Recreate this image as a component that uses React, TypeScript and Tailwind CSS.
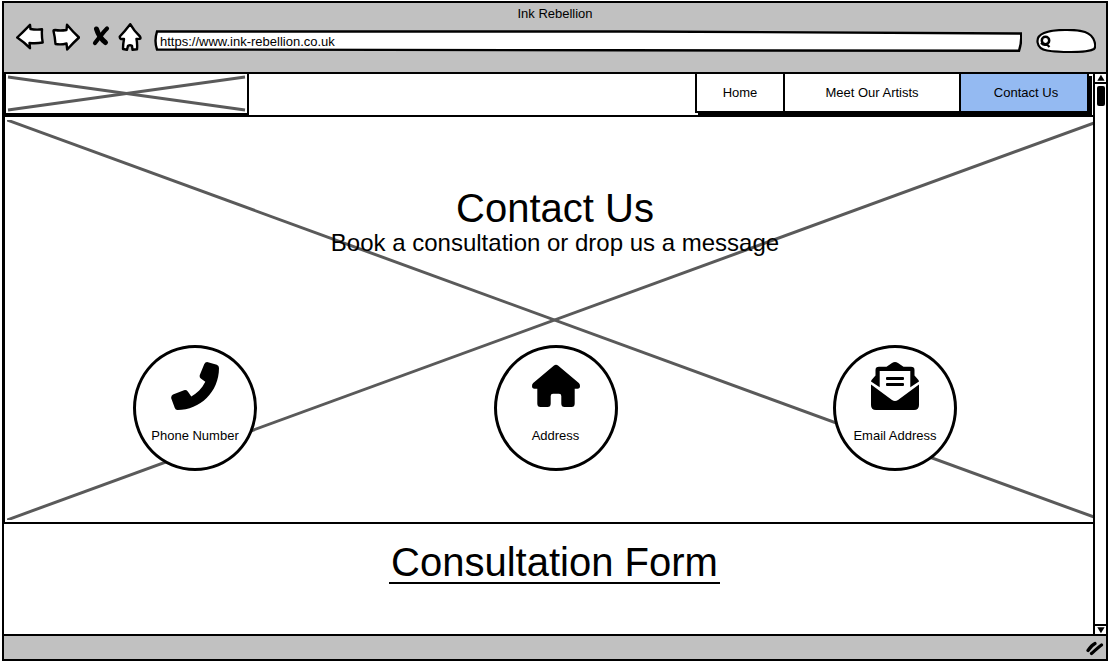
import type { ReactNode } from "react";

function BackIcon() {
  return (
    <svg className="h-7 w-7" viewBox="0 0 28 28" fill="#fff" stroke="#000" strokeWidth="2.4" strokeLinejoin="round" aria-hidden="true">
      <path d="M1.200 14.500Q7 9 14 1.800L14.500 6Q20 7 26 6.300 25.500 13 26.700 19.500 20 20.800 13.500 20L14 25.200Q8 19 1.200 14.500Z" />
    </svg>
  );
}

function ForwardIcon() {
  return (
    <svg className="h-7 w-7" viewBox="0 0 28 28" fill="#fff" stroke="#000" strokeWidth="2.4" strokeLinejoin="round" aria-hidden="true">
      <path d="M1.500 8Q1.500 7 3 7 8 8 14.500 7L15 1.800Q21 9 27 14.500 21 20 15.200 26.500L14.500 20.500Q9 22 3.500 21 3 14 1.500 8Z" />
    </svg>
  );
}

function StopIcon() {
  return (
    <svg className="h-7 w-[18px]" viewBox="0 0 18 28" fill="none" stroke="#000" strokeLinecap="round" aria-hidden="true">
      <path d="M4.500 6C6 11 9 16 13.500 19.500" strokeWidth="5" />
      <path d="M15 5.500C10.500 10 7 15 3 20" strokeWidth="4.200" />
    </svg>
  );
}

function HomeIcon() {
  return (
    <svg className="h-7 w-6" viewBox="0 0 24 28" fill="#fff" stroke="#000" strokeWidth="2.4" strokeLinejoin="round" aria-hidden="true">
      <path d="M12.200 1.200Q7 8 1.800 13.500 1.500 15.500 3 16H6Q5 21 5 26L9 26.800 10 22.800Q12 21.800 14 22.800L14.500 26.800 19 26.300Q19.500 21 18.500 16L22 15.800Q23 15.300 22 13.500 16 8 12.200 1.200Z" />
    </svg>
  );
}

function PhoneIcon() {
  return (
    <svg className="h-12 w-12 shrink-0" viewBox="0 0 48 48" aria-hidden="true">
      <path d="M37 0.200 45.800 2.800Q48 3.600 48 6C48 30 29 48 6.500 48Q4.500 48 3.800 46L0.300 36.500Q-0.300 34 2 32.500L13 28.200Q15.300 27.600 16.800 29.500L20.300 34.500C26 31.500 31 26.500 34.300 19.800L29.800 16.500Q28 15 29 12.500L33.300 2Q34.500-0.400 37 0.200Z" />
    </svg>
  );
}

function HouseIcon() {
  return (
    <svg className="h-12 w-12 shrink-0" viewBox="0 0 48 48" aria-hidden="true">
      <path d="M24 2.700Q22.900 2.700 22 3.500L1.200 21Q0 22.200 0 24 0 26.700 2.500 26.700H5.300V41.500Q5.300 45 8.500 45H15.500Q18.700 45 18.700 41.500V34Q18.700 31.700 21 31.700H27Q29.300 31.700 29.300 34V41.500Q29.300 45 32.500 45H39.500Q42.700 45 42.700 41.500V26.700H45.500Q48 26.700 48 24 48 22.200 46.800 21L26 3.500Q25.100 2.700 24 2.700Z" />
    </svg>
  );
}

function EnvelopeIcon() {
  return (
    <svg className="h-12 w-12 shrink-0" viewBox="0 0 48 48" aria-hidden="true">
      <path d="M0 22.500 21 38Q24 40 27 38L48 22.500V43Q48 48 43 48H5Q0 48 0 43Z" />
      <path d="M0 19.500Q0.200 18.200 1.200 17.200L4.500 13.500V8Q4.500 4.700 8 4.700H15.500L21 1Q24-1 27 1L32.500 4.700H40Q43.500 4.700 43.500 8V13.500L46.800 17.200Q47.800 18.200 48 19.500L39.300 25.300V9H8.700V25.300Z" />
      <path d="M16 15H32Q33 15 33 16V17Q33 18 32 18H16Q15 18 15 17V16Q15 15 16 15ZM16 21H32Q33 21 33 22V23Q33 24 32 24H16Q15 24 15 23V22Q15 21 16 21Z" />
    </svg>
  );
}

function Cross({ className }: { className: string }) {
  return (
    <svg className={className} aria-hidden="true" stroke="#5a5a5a" strokeWidth="3">
      <line x1="0" y1="0" x2="100%" y2="100%" />
      <line x1="0" y1="100%" x2="100%" y2="0" />
    </svg>
  );
}

function ContactCircle({ href, label, children }: { href: string; label: string; children: ReactNode }) {
  return (
    <a
      href={href}
      className="flex h-[126px] w-[124px] flex-col items-center gap-4 rounded-[50%] border-[3px] border-black bg-white pt-[14px] text-[13px] leading-5"
    >
      {children}
      <span className="whitespace-nowrap">{label}</span>
    </a>
  );
}

function BrowserBar() {
  return (
    <header className="flex h-[71px] shrink-0 flex-col border-b-2 border-black bg-[#c1c1c1]">
      <div className="pt-[3px] text-center text-[13px] leading-4">Ink Rebellion</div>
      <div className="flex items-start pt-px pr-[10px] pl-3">
        <button type="button" aria-label="Back">
          <BackIcon />
        </button>
        <button type="button" aria-label="Forward" className="ml-2">
          <ForwardIcon />
        </button>
        <button type="button" aria-label="Stop" className="ml-3">
          <StopIcon />
        </button>
        <button type="button" aria-label="Home page" className="ml-2">
          <HomeIcon />
        </button>
        <div className="relative mt-[7px] ml-3 h-[22px] flex-1">
          <svg className="absolute inset-0 h-full w-full" viewBox="0 0 868 22" preserveAspectRatio="none" fill="#fff" stroke="#000" strokeWidth="2.4" aria-hidden="true">
            <path d="M3 1.500C250 1 600 1 867 3.500Q868 11 865 20.800C600 20.500 250 20 3 19.500Q0 11 3 1.500Z" vectorEffect="non-scaling-stroke" />
          </svg>
          <input
            type="text"
            aria-label="Address bar"
            defaultValue="https://www.ink-rebellion.co.uk"
            className="relative block h-[22px] w-full bg-transparent px-1.5 text-[13px] outline-none"
          />
        </div>
        <div className="relative mt-1.5 ml-[14px] h-6 w-[60px]">
          <svg className="absolute inset-0 h-full w-full" viewBox="0 0 60 24" fill="#fff" stroke="#000" strokeWidth="2.2" aria-hidden="true">
            <path d="M8 4C18 0 40 0 49 3C60 7 60 18 58 20C50 24.500 20 23 11 21.500C0 20-2 8 8 4Z" />
            <circle cx="9.500" cy="11.500" r="3.700" strokeWidth="2.500" />
            <path d="M5 14Q8 17 11 15.500L13.500 18" fill="none" />
          </svg>
          <input type="search" aria-label="Search" className="relative block h-full w-full bg-transparent pr-2 pl-5 text-[13px] outline-none" />
        </div>
      </div>
    </header>
  );
}

function SiteHeader() {
  return (
    <div className="flex h-[41px] shrink-0 items-start justify-between">
      <div className="relative h-[41px] w-[245px] border-2 border-t-0 border-black">
        <Cross className="absolute top-[3px] left-0.5 h-[33px] w-[237px] overflow-visible" />
      </div>
      <nav
        aria-label="Main"
        className="mr-1 flex h-[39px] border-2 border-t-0 border-black bg-white text-[13px] shadow-[3px_2px_0_#000]"
      >
        <a href="#home" className="flex w-[86px] items-center justify-center">
          Home
        </a>
        <a href="#artists" className="flex w-[176px] items-center justify-center border-l-2 border-black">
          Meet Our Artists
        </a>
        <a href="#contact" aria-current="page" className="flex w-[128px] items-center justify-center border-l-2 border-black bg-[#94baf2] pl-1">
          Contact Us
        </a>
      </nav>
    </div>
  );
}

function Scrollbar() {
  return (
    <div className="flex w-[13px] shrink-0 flex-col border-l-2 border-black bg-white" aria-hidden="true">
      <svg className="h-[10px] w-full border-b-2 border-black" viewBox="0 0 12 8">
        <path d="M6.500 0.500 10.500 7H2.500Z" />
      </svg>
      <div className="mt-0.5 ml-0.5 h-5 w-2 rounded-[2px] bg-black" />
      <svg className="mt-auto h-[10px] w-full border-t-2 border-black" viewBox="0 0 12 8">
        <path d="M2.500 1H10.500L6.500 7.500Z" />
      </svg>
    </div>
  );
}

export default function App() {
  return (
    <div className="flex min-h-screen flex-col bg-white pt-px pr-px pb-px pl-0.5 font-['Liberation_Sans',Arial,sans-serif] text-black">
      <div className="flex flex-1 flex-col border-2 border-black">
        <BrowserBar />
        <div className="flex flex-1">
          <main className="flex min-w-0 flex-1 flex-col">
            <SiteHeader />
            <section className="relative flex h-[409px] shrink-0 flex-col overflow-hidden border-y-2 border-l border-black">
              <div className="absolute top-[3px] -right-[9px] bottom-0.5 left-0.5">
                <Cross className="h-full w-full" />
              </div>
              <div className="relative pt-[67px] pl-3 text-center">
                <h1 className="text-[40px] leading-[48px]">Contact Us</h1>
                <p className="text-2xl leading-[22px]">Book a consultation or drop us a message</p>
              </div>
              <div className="relative mt-[91px] grid grid-cols-[380fr_341fr_338fr] justify-items-center pr-[29px]">
                <ContactCircle href="#phone" label="Phone Number">
                  <PhoneIcon />
                </ContactCircle>
                <ContactCircle href="#address" label="Address">
                  <HouseIcon />
                </ContactCircle>
                <ContactCircle href="#email" label="Email Address">
                  <EnvelopeIcon />
                </ContactCircle>
              </div>
            </section>
            <section className="flex flex-1 justify-center pt-[14px] pl-3">
              <h2 className="h-[46px] self-start border-b-2 border-black px-0.5 text-[40px] leading-[48px]">Consultation Form</h2>
            </section>
          </main>
          <Scrollbar />
        </div>
        <footer className="flex h-[25px] shrink-0 items-center justify-end border-t-2 border-black bg-[#c1c1c1] pr-0.5">
          <svg className="h-4 w-[18px]" viewBox="0 0 18 16" fill="none" stroke="#000" strokeWidth="3.200" strokeLinecap="round" aria-hidden="true">
            <path d="M2 10.500C4 7.500 6 5 9 3.500M5.500 13.500C9 10.500 12 7.500 15.500 5" />
          </svg>
        </footer>
      </div>
    </div>
  );
}
